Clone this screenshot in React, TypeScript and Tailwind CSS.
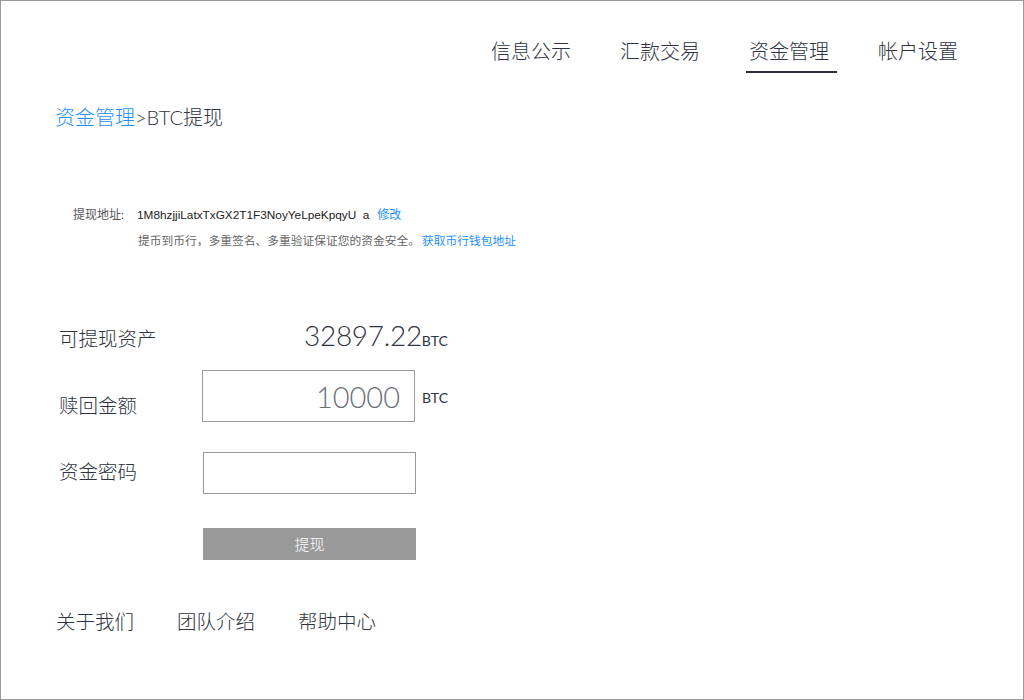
import { useState } from 'react';

const cjk = "font-['Lato','Noto_Sans_CJK_SC',sans-serif]";

const navItems = ['信息公示', '汇款交易', '资金管理', '帐户设置'];
const footerLinks = ['关于我们', '团队介绍', '帮助中心'];

export default function App() {
  const [amount, setAmount] = useState('10000');
  const [password, setPassword] = useState('');

  return (
    <div className={`w-[1024px] h-[700px] bg-white border border-[#9a9a9a] text-[#2e3340] ${cjk} font-light flex flex-col`}>
      {/* top nav */}
      <nav className="flex justify-end gap-[49px] pr-[65px] pt-[36px] text-[20px] leading-[28px]">
        {navItems.map((item) => (
          <a key={item} className="relative cursor-pointer">
            {item}
            {item === '资金管理' && (
              <span className="absolute left-[-3px] right-[-8px] top-[34px] h-[2px] bg-[#2a2f3a]" />
            )}
          </a>
        ))}
      </nav>

      {/* breadcrumb */}
      <div className="pl-[54px] mt-[38px] text-[20px] leading-[28px]">
        <span className="text-[#1e8fff]">资金管理</span>
        <span>&gt;BTC提现</span>
      </div>

      {/* address */}
      <div className="pl-[72px] mt-[76px] text-[12px] leading-[16px] font-normal">
        <div className="flex items-center">
          <span className="w-[64px] text-[#555]">提现地址:</span>
          <span className="font-['Liberation_Sans',sans-serif] text-[11.8px] text-[#222]">1M8hzjjiLatxTxGX2T1F3NoyYeLpeKpqyU&nbsp;&nbsp;a</span>
          <a className="ml-[8px] text-[#1e8fff] cursor-pointer">修改</a>
        </div>
        <div className="flex items-center mt-[10px] pl-[65px] text-[11.75px]">
          <span className="text-[#666]">提币到币行，多重签名、多重验证保证您的资金安全。</span>
          <a className="ml-[2px] text-[#1e8fff] cursor-pointer">获取币行钱包地址</a>
        </div>
      </div>

      {/* form */}
      <div className="pl-[58px] mt-[66px] text-[19.5px]">
        <div className="flex items-end h-[40px]">
          <span className="w-[245px] leading-[28px] pb-[2px]">可提现资产</span>
          <span className="text-[28px] leading-[40px] tracking-[-0.3px]">32897.22</span>
          <span className="text-[14px] leading-[20px] pb-[4px] font-normal">BTC</span>
        </div>

        <div className="flex items-center mt-[15px]">
          <span className="w-[143px] leading-[28px] mt-[20px]">赎回金额</span>
          <input
            value={amount}
            onChange={(e) => setAmount(e.target.value)}
            className="w-[213px] h-[52px] border border-[#999] text-right pr-[14px] text-[29px] font-light text-[#6b7079] outline-none"
          />
          <span className="ml-[7px] text-[14px] mt-[2px] font-normal">BTC</span>
        </div>

        <div className="flex items-center mt-[30px]">
          <span className="w-[144px] leading-[28px] mt-[-2px]">资金密码</span>
          <input
            type="password"
            value={password}
            onChange={(e) => setPassword(e.target.value)}
            className="w-[213px] h-[42px] border border-[#999] outline-none px-2"
          />
        </div>

        <div className="flex mt-[34px] pl-[144px]">
          <button className="w-[213px] h-[32px] bg-[#999] text-white text-[15px]">提现</button>
        </div>
      </div>

      {/* footer */}
      <footer className="flex gap-[43px] pl-[55px] mt-[48px] text-[19.5px] leading-[28px]">
        {footerLinks.map((l) => (
          <a key={l} className="cursor-pointer">{l}</a>
        ))}
      </footer>
    </div>
  );
}
